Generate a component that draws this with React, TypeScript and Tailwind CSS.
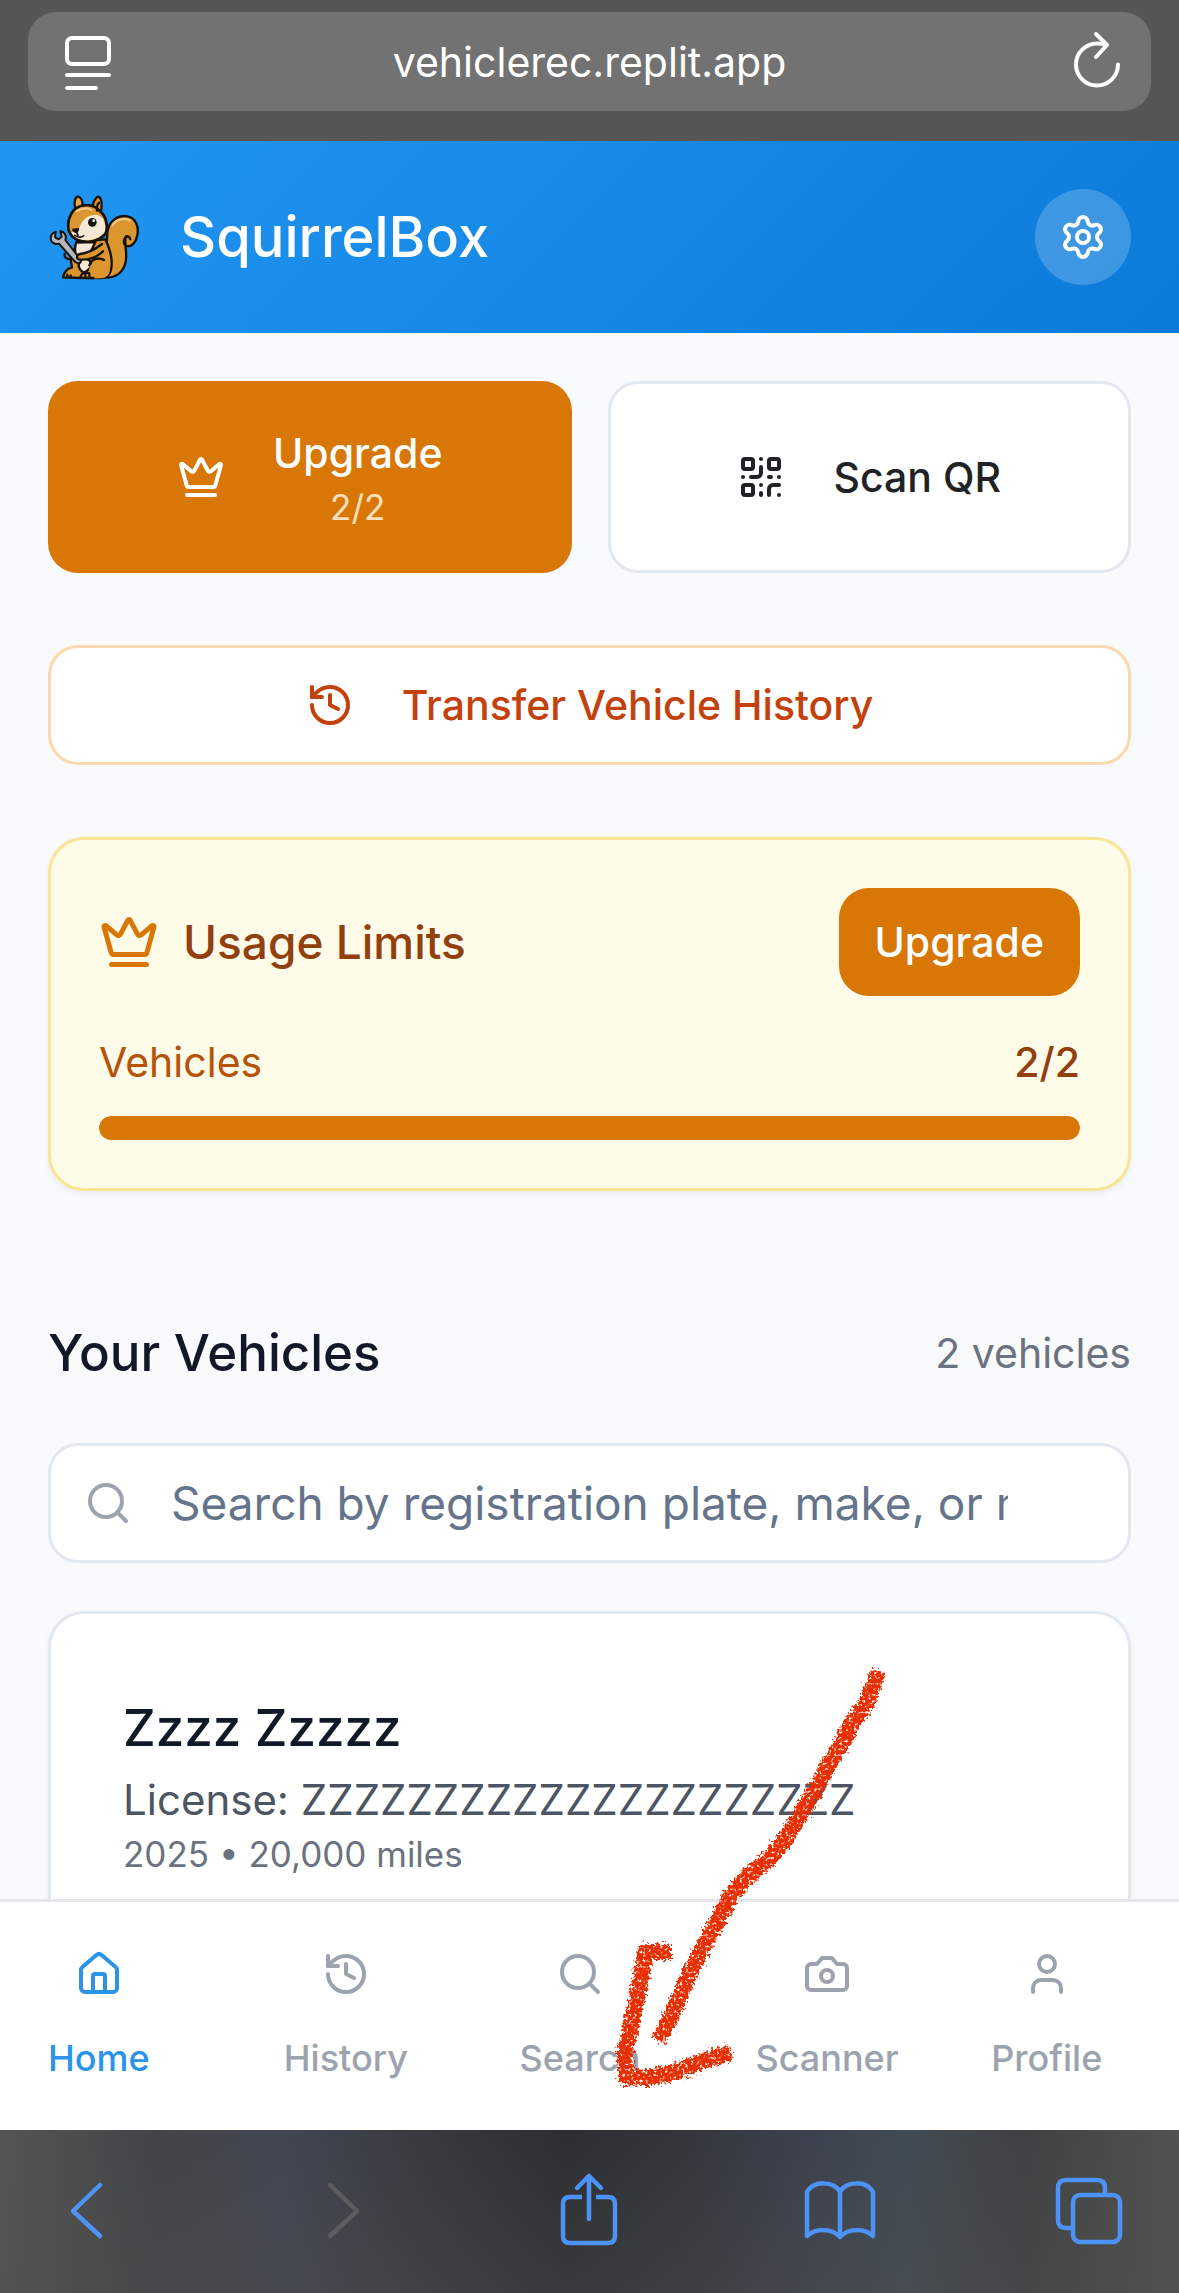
import type { ReactNode } from "react";
import { Crown, History, House, QrCode, Search, Settings, User } from "lucide-react";

const SquirrelLogo = () => (
  <svg viewBox="54 27 288 288" className="h-24 w-24 shrink-0" role="img" aria-label="SquirrelBox logo" strokeLinecap="round" strokeLinejoin="round">
    <g stroke="#17130c" strokeWidth="7">
      {/* tail */}
      <path d="M232 158C236 122 264 104 292 109C318 114 327 140 322 166C318 188 304 202 290 198C280 194 278 178 288 172C294 168 300 172 301 178C300 170 292 166 287 170C282 196 294 222 286 250C278 278 256 294 225 293Z" fill="#dc962f" />
      {/* body */}
      <path d="M140 186C136 206 128 222 122 238L126 262C112 266 102 276 99 292L156 294L215 294C238 292 246 274 245 246C245 222 236 200 226 178Z" fill="#dc962f" />
      <path d="M138 188C132 212 136 232 150 246C142 256 146 266 158 276C166 280 174 270 182 262C186 250 180 240 172 238L196 186Z" fill="#f3e9d6" />
      <path d="M151 292C152 280 166 276 176 280C176 254 196 232 226 238C246 256 246 292 214 295L158 296C152 296 151 294 151 292Z" fill="#dc962f" stroke="none" />
      <path d="M178 280C164 274 152 280 152 293L190 294M178 256C184 238 204 230 222 240M166 284V292M178 284V292M112 284V291M122 286V292" fill="none" />
      {/* wrench */}
      <path d="M77 155C65 158 59 171 64 183C69 191 80 194 87 191L132 242C140 254 154 250 153 241C152 236 147 231 142 226L106 180C111 169 104 155 91 154L95 170L86 178L75 172Z" fill="#b9b6bb" strokeWidth="6" />
      {/* arm */}
      <path d="M216 192C196 208 178 218 150 222C140 224 138 234 146 238C176 242 202 230 219 214" fill="#dc962f" />
      <path d="M104 221C102 230 108 237 119 237" fill="#dc962f" />
      {/* ears and head */}
      <path d="M136 86C130 66 136 50 144 50C153 52 158 64 158 76" fill="#e9a54a" />
      <path d="M188 76C192 58 202 48 208 51C217 58 216 80 212 102" fill="#dc962f" />
      <path d="M136 86C158 70 190 72 206 90C228 106 234 134 229 156C220 176 186 190 160 184C140 182 126 172 120 160C108 140 116 104 136 86Z" fill="#dc962f" />
      <path d="M146 152C150 126 168 106 196 104C214 104 226 120 227 146C222 170 190 182 160 181C142 178 130 170 124 157Z" fill="#f3e9d6" stroke="none" />
      <path d="M136 86C158 70 190 72 206 90C228 106 234 134 229 156C220 176 186 190 160 184C140 182 126 172 120 160C108 140 116 104 136 86Z" fill="none" />
      <path d="M134 166C146 174 158 172 161 167M139 154L144 166" fill="none" strokeWidth="5" />
      <path d="M201 92C200 80 203 72 207 68" fill="none" />
    </g>
    <path d="M126 146L147 144C149 152 143 159 137 159C131 158 126 152 126 146Z" fill="#17130c" />
    <circle cx="187" cy="127" r="13" fill="#17130c" />
    <circle cx="191" cy="122" r="4" fill="#fff" />
    <path d="M140 94C158 82 178 84 184 90" fill="none" stroke="#f6cb8d" strokeWidth="6" />
    <path d="M248 136C258 118 284 112 300 122" fill="none" stroke="#f6cb8d" strokeWidth="6" />
  </svg>
);

const CameraIcon = () => (
  <svg viewBox="0 0 24 24" className="h-12 w-12" fill="none" stroke="currentColor" strokeWidth="2" strokeLinecap="round" strokeLinejoin="round">
    <path d="M14.5 4h-5L7 7H4a2 2 0 0 0-2 2v9a2 2 0 0 0 2 2h16a2 2 0 0 0 2-2V9a2 2 0 0 0-2-2h-3l-2.5-3z" />
    <circle cx="12" cy="13" r="3" />
  </svg>
);

const ArrowNote = () => (
  <svg
    viewBox="590 1660 300 440"
    className="pointer-events-none absolute bottom-[30px] left-1/2 h-[440px] w-[300px]"
    fill="none"
    stroke="#e62e06"
    strokeWidth="16"
    strokeLinejoin="round"
    aria-hidden="true"
  >
    <filter id="crayon" filterUnits="userSpaceOnUse" x="590" y="1660" width="300" height="440">
      <feTurbulence type="fractalNoise" baseFrequency="0.35" numOctaves="2" seed="4" result="noise" />
      <feDisplacementMap in="SourceGraphic" in2="noise" scale="12" xChannelSelector="R" yChannelSelector="G" result="rough" />
      <feColorMatrix in="noise" type="matrix" values="0 0 0 0 0  0 0 0 0 0  0 0 0 0 0  0 0 -4 0 3.2" result="grain" />
      <feComposite in="rough" in2="grain" operator="in" />
    </filter>
    <g filter="url(#crayon)">
      <path d="M878 1671L867 1703L852 1722L843 1742L830 1762L817 1787L797 1820L783 1842L767 1861L747 1877L731 1895L717 1922L703 1947L690 1973L678 2000L668 2023L658 2040" />
      <path d="M671 1952L645 1952L640 1983L632 2020L625 2053L626 2077L647 2078L677 2072L700 2062L731 2052" />
    </g>
  </svg>
);

const ToolbarIcon = ({ label, children, disabled }: { label: string; children: ReactNode; disabled?: boolean }) => (
  <button type="button" aria-label={label} disabled={disabled} className="text-[#4d93f5] disabled:text-[#5c5d60]">
    <svg viewBox="0 0 60 78" className="h-[78px] w-[60px] overflow-visible" fill="none" stroke="currentColor" strokeWidth="4.5" strokeLinecap="round" strokeLinejoin="round">
      {children}
    </svg>
  </button>
);

const navItems = [
  { label: "Home", icon: <House className="h-12 w-12" />, active: true },
  { label: "History", icon: <History className="h-12 w-12" /> },
  { label: "Search", icon: <Search className="h-12 w-12" /> },
  { label: "Scanner", icon: <CameraIcon /> },
  { label: "Profile", icon: <User className="h-12 w-12" /> },
];

const vehicles = [
  {
    name: "Zzzz Zzzzz",
    license: "ZZZZZZZZZZZZZZZZZZZZZ",
    details: "2025 • 20,000 miles",
  },
];

export default function App() {
  return (
    <div className="flex h-screen flex-col bg-slate-50 font-['Inter',sans-serif]">
      <div className="bg-[#565656] px-7 pt-3 pb-[30px]">
        <div className="flex h-[99px] items-center justify-between rounded-[28px] bg-[#727272] px-9 text-white">
          <button type="button" aria-label="Page menu">
            <svg viewBox="0 0 48 60" className="h-[60px] w-12" fill="none" stroke="currentColor" strokeWidth="4" strokeLinecap="round">
              <rect x="3" y="6" width="42" height="26" rx="5" />
              <path d="M3 43H45M3 56H32" />
            </svg>
          </button>
          <span className="text-[41px] leading-[60px]">vehiclerec.replit.app</span>
          <button type="button" aria-label="Reload">
            <svg viewBox="0 0 48 60" className="h-[60px] w-12 overflow-visible" fill="none" stroke="currentColor" strokeWidth="4" strokeLinecap="round" strokeLinejoin="round">
              <path d="M39 13C37 12 33 11.500 30 11.500A21 21 0 1 0 51 32.500M29 2L40 13L29 25" />
            </svg>
          </button>
        </div>
      </div>

      <header className="flex items-center justify-between bg-linear-135 from-[#2196f3] to-[#0b7ad8] px-12 py-12">
        <div className="flex items-center gap-9">
          <SquirrelLogo />
          <h1 className="text-[56px] leading-[84px] font-medium text-white">SquirrelBox</h1>
        </div>
        <button type="button" aria-label="Settings" className="flex h-24 w-24 items-center justify-center rounded-full bg-white/20 text-white">
          <Settings className="h-12 w-12" />
        </button>
      </header>

      <main className="min-h-0 flex-1 overflow-hidden px-12 pt-12">
        <div className="grid grid-cols-2 gap-9">
          <button type="button" className="flex h-48 items-center justify-center gap-12 rounded-[30px] bg-[#d97706] text-white">
            <Crown className="h-12 w-12" />
            <span className="flex flex-col items-center">
              <span className="text-[41px] leading-[60px] font-medium">Upgrade</span>
              <span className="text-[35px] leading-[48px] text-[#fee0bd]">2/2</span>
            </span>
          </button>
          <button type="button" className="flex h-48 items-center justify-center gap-12 rounded-[30px] border-3 border-slate-200 bg-white text-[#212225]">
            <QrCode className="h-12 w-12" />
            <span className="text-[41px] leading-[60px] font-medium">Scan QR</span>
          </button>
        </div>

        <button type="button" className="mt-18 flex h-30 w-full items-center justify-center gap-12 rounded-[30px] border-3 border-[#fbd9ae] bg-white text-[#c2410c]">
          <History className="h-12 w-12" />
          <span className="text-[41px] leading-[60px] font-medium">Transfer Vehicle History</span>
        </button>

        <section className="mt-18 rounded-[36px] border-3 border-[#f8e596] bg-[#fffbe9] p-12 shadow-[0_3px_6px_rgba(0,0,0,0.06)]">
          <div className="flex items-center justify-between">
            <div className="flex items-center gap-6">
              <Crown className="h-15 w-15 text-[#d97706]" />
              <h2 className="text-[46px] leading-[72px] font-medium text-[#92400e]">Usage Limits</h2>
            </div>
            <button type="button" className="h-27 rounded-[30px] bg-[#d97706] px-9 text-[41px] leading-[60px] font-medium text-white">
              Upgrade
            </button>
          </div>
          <div className="mt-9 flex items-center justify-between text-[41px] leading-[60px]">
            <span className="text-[#b45309]">Vehicles</span>
            <span className="font-medium text-[#92400e]">2/2</span>
          </div>
          <div role="progressbar" aria-label="Vehicles used" aria-valuenow={2} aria-valuemax={2} className="mt-6 h-6 overflow-hidden rounded-full bg-amber-100">
            <div className="h-full w-full rounded-full bg-[#d97706]" />
          </div>
        </section>

        <div className="mt-30 flex items-center justify-between">
          <h2 className="text-[51px] leading-[84px] font-medium text-[#111827]">Your Vehicles</h2>
          <span className="text-[41px] leading-[60px] text-[#6b7280]">2 vehicles</span>
        </div>

        <div className="relative mt-12">
          <Search className="absolute top-9 left-9 h-12 w-12 text-[#9ca3af]" />
          <input
            type="text"
            aria-label="Search vehicles"
            placeholder="Search by registration plate, make, or model..."
            className="h-30 w-full rounded-[30px] border-3 border-slate-200 bg-white px-30 text-[46px] leading-[72px] placeholder:text-[#64748b]"
          />
        </div>

        {vehicles.map((vehicle) => (
          <article key={vehicle.name} className="mt-12 rounded-[36px] border-3 border-slate-200 bg-white p-18 shadow-[0_3px_6px_rgba(0,0,0,0.06)]">
            <h3 className="text-[51px] leading-[84px] font-medium text-[#111827]">{vehicle.name}</h3>
            <p className="text-[42px] leading-[60px] text-[#4b5563]">License: {vehicle.license}</p>
            <p className="text-[35px] leading-[48px] text-[#6b7280]">{vehicle.details}</p>
          </article>
        ))}
      </main>

      <nav className="relative grid grid-cols-5 justify-items-start border-t-3 border-gray-200 bg-white py-12">
        {navItems.map((item) => (
          <a
            key={item.label}
            href="#"
            className={`flex flex-col items-center gap-9 pl-12 ${item.active ? "text-[#2b93e8]" : "text-[#9ca3af]"}`}
          >
            {item.icon}
            <span className="text-[36px] leading-[48px] font-medium">{item.label}</span>
          </a>
        ))}
        <ArrowNote />
      </nav>

      <div className="flex items-start justify-between bg-[linear-gradient(to_bottom,transparent,rgba(80,80,80,0.35)),linear-gradient(to_right,#555555_0%,#434446_13%,#414652_24%,#36383c_38%,#2c2e32_48%,#33363c_58%,#3c414d_68%,#414b54_77%,#404142_87%,#525252_100%)] px-[57px] pt-[37px] pb-12">
        <ToolbarIcon label="Back">
          <path d="M43 18L16 44L43 69" />
        </ToolbarIcon>
        <ToolbarIcon label="Forward" disabled>
          <path d="M22 18L49 44L22 69" />
        </ToolbarIcon>
        <ToolbarIcon label="Share">
          <path d="M29 52V9M17 21L29 9L41 21" />
          <path strokeLinecap="butt" d="M22 30H10Q3 30 3 37V69Q3 76 10 76H48Q55 76 55 69V37Q55 30 48 30H36" />
        </ToolbarIcon>
        <ToolbarIcon label="Bookmarks">
          <path d="M29 25C23 14 3 13 -4 25V69C5 61 21 61 29 70C37 61 53 61 62 69V25C55 13 35 14 29 25V70" />
        </ToolbarIcon>
        <ToolbarIcon label="Tabs">
          <rect x="11" y="28" width="47" height="47" rx="7" />
          <path strokeLinecap="butt" d="M11 61H4Q-4 61 -4 53V21Q-4 13 4 13H35Q43 13 43 21V28" />
        </ToolbarIcon>
      </div>
    </div>
  );
}
